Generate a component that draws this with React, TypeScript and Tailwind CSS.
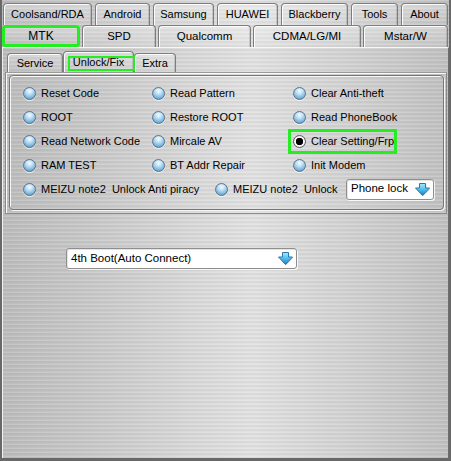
import React from "react";

// Brushed-metal surface: fine horizontal streaks over a soft left-to-right sheen.
const METAL =
  "bg-[image:repeating-linear-gradient(180deg,rgba(255,255,255,0.13)_0px,rgba(255,255,255,0.13)_1px,rgba(0,0,0,0.035)_1px,rgba(0,0,0,0.035)_3px,transparent_3px,transparent_4px),linear-gradient(90deg,#bdbdbd_0%,#c9c9c9_20%,#dbdbdb_45%,#e2e2e2_56%,#d2d2d2_78%,#c1c1c1_100%)]";

const TAB =
  "flex items-center justify-center shrink-0 rounded-t-[4px] bg-[linear-gradient(180deg,rgba(255,255,255,0.32),rgba(255,255,255,0.06))]";
const TAB_EDGE =
  "border border-b-0 border-[#7d7d7d] shadow-[inset_1px_1px_0_rgba(255,255,255,0.9),inset_-1px_0_0_rgba(0,0,0,0.12)]";

function Tab({ label, className }: { label: string; className: string }) {
  return <div className={`${TAB} ${TAB_EDGE} ${className}`}>{label}</div>;
}

function Radio({ checked = false }: { checked?: boolean }) {
  if (checked) {
    return (
      <span className="w-[13px] h-[13px] shrink-0 rounded-full border border-[#5d5d5d] bg-[radial-gradient(circle,#000_0%,#000_44%,#ffffff_52%,#f0f0f0_66%,#b8b8b8_100%)]" />
    );
  }
  return (
    <span className="w-[13px] h-[13px] shrink-0 rounded-full border border-[#5f7388] bg-[radial-gradient(circle_at_50%_28%,#f6fcff_0%,#c4e4f6_30%,#79b4de_70%,#4a88bd_100%)] shadow-[0_1px_0_rgba(255,255,255,0.7)]" />
  );
}

function Option({ label, checked }: { label: string; checked?: boolean }) {
  return (
    <div className="flex items-center gap-[5px] h-[24px] whitespace-pre">
      <Radio checked={checked} />
      <span>{label}</span>
    </div>
  );
}

function DropArrow({ id }: { id: string }) {
  return (
    <svg width="17" height="15" viewBox="0 0 17 15">
      <defs>
        <linearGradient id={id} x1="0" y1="0" x2="0" y2="1">
          <stop offset="0" stopColor="#a8eaff" />
          <stop offset="0.5" stopColor="#4cc0ee" />
          <stop offset="1" stopColor="#1c7cc0" />
        </linearGradient>
      </defs>
      <path d="M5.5 1.5 H11.5 V6 H15.5 L8.5 13.5 L1.5 6 H5.5 Z" fill="rgba(0,0,0,0.18)" transform="translate(0.8 0.8)" />
      <path d="M5.5 1.5 H11.5 V6 H15.5 L8.5 13.5 L1.5 6 H5.5 Z" fill={`url(#${id})`} stroke="#2f76a8" strokeWidth="1" strokeLinejoin="round" />
    </svg>
  );
}

function Combo({ text, className, id }: { text: string; className: string; id: string }) {
  return (
    <div
      className={`flex items-center justify-between h-[21px] pl-[4px] pr-[2px] rounded-[3px] border border-[#8e8e8e] bg-white shadow-[inset_1px_1px_0_#e4e4e4,1px_1px_0_rgba(255,255,255,0.8)] text-[11.5px] ${className}`}
    >
      <span>{text}</span>
      <DropArrow id={id} />
    </div>
  );
}

export default function App() {
  return (
    <div
      className={`w-[451px] h-[461px] overflow-hidden flex flex-col border-l-2 border-r-2 border-b-[3px] border-[#686868] text-black text-[11px] leading-none font-['Liberation_Sans',Arial,sans-serif] ${METAL}`}
    >
      {/* back row of vendor tabs */}
      <div className="flex gap-[3px] pl-[1px] pt-[3px] h-[25px] shrink-0">
        <Tab label="Coolsand/RDA" className="w-[89px] h-[22px]" />
        <Tab label="Android" className="w-[55px] h-[22px]" />
        <Tab label="Samsung" className="w-[61px] h-[22px]" />
        <Tab label="HUAWEI" className="w-[61px] h-[22px]" />
        <Tab label="Blackberry" className="w-[67px] h-[22px]" />
        <Tab label="Tools" className="w-[47px] h-[22px]" />
        <Tab label="About" className="w-[47px] h-[22px]" />
      </div>

      {/* front row of vendor tabs */}
      <div className="flex gap-[2px] h-[22px] shrink-0">
        <div className={`${TAB} w-[78px] h-[22px] rounded-[3px] border-[3px] border-[#22ee22] text-[12px]`}>MTK</div>
        <Tab label="SPD" className="w-[74px] h-[22px] text-[11.5px]" />
        <Tab label="Qualcomm" className="w-[93px] h-[22px] text-[11.5px]" />
        <Tab label="CDMA/LG/MI" className="w-[108px] h-[22px] text-[11.5px]" />
        <Tab label="Mstar/W" className="w-[85px] h-[22px] text-[11.5px]" />
      </div>

      {/* MTK page */}
      <div className="flex-1 flex flex-col border-t border-l border-t-[#f6f6f6] border-l-[#f0f0f0] border-r border-r-[#6e6e6e]">
        <div className="flex items-end h-[24px] pl-[4px] shrink-0">
          <Tab label="Service" className="w-[56px] h-[19px]" />
          <div className={`${TAB} ${TAB_EDGE} relative w-[71px] h-[21px]`}>
            <span className="absolute left-[4px] top-[4px] w-[67px] h-[15px] border-2 border-[#22ee22]" />
            <span className="pt-[1px]">Unlock/Fix</span>
          </div>
          <Tab label="Extra" className="w-[42px] h-[19px]" />
        </div>

        {/* Unlock/Fix sheet */}
        <div className="ml-[2px] mr-[1px] h-[142px] shrink-0 border border-[#8a8a8a] border-t-[#9a9a9a] shadow-[inset_1px_1px_0_rgba(255,255,255,0.9)] pt-[2px] pl-[3px] pr-[2px]">
          <div className="h-[135px] rounded-[4px] border border-[#767676] shadow-[inset_1px_1px_0_#f6f6f6,1px_1px_0_#f6f6f6] pt-[5px] pl-[13px]">
            <div className="grid grid-cols-[129px_141px_1fr] auto-rows-[24px]">
              <Option label="Reset Code" />
              <Option label="Read Pattern" />
              <Option label="Clear Anti-theft" />

              <Option label="ROOT" />
              <Option label="Restore ROOT" />
              <Option label="Read PhoneBook" />

              <Option label="Read Network Code" />
              <Option label="Mircale AV" />
              <div className="relative">
                <Option label="Clear Setting/Frp" checked />
                <span className="absolute left-[-5px] top-0 w-[109px] h-[25px] border-[3px] border-[#22ee22]" />
              </div>

              <Option label="RAM TEST" />
              <Option label="BT Addr Repair" />
              <Option label="Init Modem" />
            </div>

            <div className="flex items-center h-[24px]">
              <div className="w-[192px] shrink-0">
                <Option label="MEIZU note2  Unlock Anti piracy" />
              </div>
              <div className="w-[131px] shrink-0">
                <Option label="MEIZU note2  Unlock" />
              </div>
              <Combo id="lockArrow" text="Phone lock" className="w-[88px]" />
            </div>
          </div>
        </div>

        <div className="pt-[34px] pl-[63px]">
          <Combo id="bootArrow" text="4th Boot(Auto Connect)" className="w-[231px]" />
        </div>
      </div>
    </div>
  );
}
